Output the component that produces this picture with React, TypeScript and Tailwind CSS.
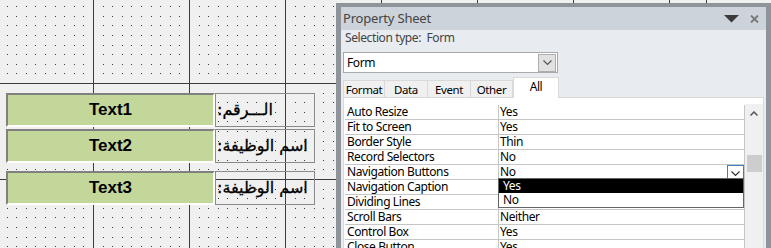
import React from "react";

const UI = { fontFamily: '"Noto Sans", "Open Sans", sans-serif' };

function Grid() {
  const dots: React.ReactNode[] = [];
  for (let i = 0; i < 36; i++) {
    const x = Math.round(6.6 + 9.6 * i);
    for (let j = 0; j < 26; j++) {
      const y = Math.round(6.2 + 9.6 * j);
      dots.push(<rect key={`${i}-${j}`} x={x} y={y} width={1} height={1} fill="#3a3a3a" />);
    }
  }
  const vx = [93, 189, 285, 381, 477, 573, 669, 706];
  const hy = [83, 179];
  return (
    <svg className="absolute inset-0" width={771} height={248}>
      {dots}
      {vx.map((x) => (
        <rect key={"v" + x} x={x} y={0} width={1} height={248} fill="#3c3c3c" />
      ))}
      {hy.map((y) => (
        <rect key={"h" + y} x={0} y={y} width={771} height={1} fill="#3c3c3c" />
      ))}
    </svg>
  );
}

function FieldRow({ text, label, className }: { text: string; label: string; className?: string }) {
  return (
    <div className={"flex " + (className ?? "")}>
      <div
        className="w-[209px] h-[34px] bg-[#c4d79b] border-t-2 border-l-2 border-b-2 border-r-2 border-t-[#808080] border-l-[#808080] border-b-white border-r-white flex items-center justify-center text-[17px] font-bold text-black"
        style={{ fontFamily: '"Liberation Sans", Arial, sans-serif' }}
      >
        {text}
      </div>
      <div
        dir="rtl"
        className="w-[100px] h-[34px] border border-[#8a8a8a] flex items-center pl-[1px] text-[16px] text-black whitespace-nowrap overflow-hidden"
        style={{ fontFamily: '"DejaVu Sans", sans-serif', WebkitTextStroke: "0.3px #000" }}
      >
        <span className="w-full text-left">{label}</span>
      </div>
    </div>
  );
}

const rows: [string, string][] = [
  ["Auto Resize", "Yes"],
  ["Fit to Screen", "Yes"],
  ["Border Style", "Thin"],
  ["Record Selectors", "No"],
  ["Navigation Buttons", "No"],
  ["Navigation Caption", ""],
  ["Dividing Lines", ""],
  ["Scroll Bars", "Neither"],
  ["Control Box", "Yes"],
  ["Close Button", "Yes"],
];

function Chevron({ color = "#555" }: { color?: string }) {
  return (
    <svg width="9" height="6" viewBox="0 0 9 6">
      <polyline points="0.5,0.5 4.5,4.5 8.5,0.5" fill="none" stroke={color} strokeWidth="1.2" />
    </svg>
  );
}

function PropertySheet() {
  const tabs = [
    { t: "Format", w: "w-[42px]" },
    { t: "Data", w: "w-[43px]" },
    { t: "Event", w: "w-[43px]" },
    { t: "Other", w: "w-[42px]" },
  ];
  return (
    <div
      className="flex-1 mt-[3px] h-[245px] border-t-4 border-l-[5px] border-r-[5px] border-[#8f949a] bg-[#e8ebef] flex flex-col tracking-[-0.4px]"
      style={UI}
    >
      <div className="h-[23px] bg-[#cdd3da] flex items-center pl-[2px] pr-[7px] shrink-0">
        <span className="text-[13px] text-[#444] leading-none tracking-[-0.2px]">Property Sheet</span>
        <div className="ml-auto flex items-center gap-[11px]">
          <svg width="15" height="8" viewBox="0 0 15 8">
            <polygon points="0,0 15,0 7.5,7.5" fill="#3a3a3a" />
          </svg>
          <svg width="9" height="8" viewBox="0 0 9 8">
            <path d="M1 0.5 L8 7.5 M8 0.5 L1 7.5" stroke="#777" strokeWidth="1.8" />
          </svg>
        </div>
      </div>
      <div className="pl-[2px] pr-[2px] flex flex-col flex-1 min-h-0">
        <div className="h-[16px] flex items-center pl-[2px] text-[12px] text-[#444] whitespace-pre leading-none">
          Selection type:  Form
        </div>
        <div className="mt-[6px] w-[215px] h-[21px] bg-white border border-[#a9a9a9] flex items-center pl-[3px] pr-[1px]">
          <span className="text-[12px] text-black leading-none">Form</span>
          <div className="ml-auto w-[18px] h-[18px] bg-[#e1e1e1] border border-[#adadad] flex items-center justify-center">
            <Chevron color="#555" />
          </div>
        </div>
        <div className="mt-[4px] flex items-end h-[20px]">
          {tabs.map((tb) => (
            <div
              key={tb.t}
              className={`${tb.w} h-[17px] bg-[#f0f0f0] border-t border-r border-[#d9d9d9] first:border-l flex items-center justify-center text-[11.5px] text-black leading-none pt-[2px] tracking-[-0.4px]`}
            >
              {tb.t}
            </div>
          ))}
          <div className="w-[46px] h-[21px] -mb-px bg-white border-t border-l border-r border-[#d9d9d9] relative z-10 flex items-start justify-center pt-[3px] text-[12px] text-black leading-none">
            All
          </div>
        </div>
        <div className="flex-1 bg-white border border-[#d9d9d9] border-b-0 pt-[7px] pl-[1px] flex min-h-0">
          <div className="w-[400px] flex flex-col">
            {rows.map(([k, v]) => (
              <div key={k} className="flex h-[15px] shrink-0 border-b border-[#c6c6c6] text-[12px] leading-[14px] text-black">
                <div className="w-[154px] border-r border-[#c6c6c6] pl-[2px] whitespace-nowrap">{k}</div>
                <div className="w-[246px] border-r border-[#c6c6c6] pl-[1px] relative">
                  {v}
                  {k === "Navigation Buttons" && (
                    <>
                      <div className="absolute right-0 top-0 w-[17px] h-[14px] bg-white border border-[#3c7fc4] flex items-end justify-center pb-[1px]">
                        <Chevron color="#333" />
                      </div>
                      <div className="absolute left-[-1px] top-[13px] w-[246px] h-[30px] bg-white border border-[#646464] z-20 flex flex-col">
                        <div className="h-[14px] bg-black text-white pl-[4px] leading-[14px]">Yes</div>
                        <div className="h-[14px] bg-white text-black pl-[4px] leading-[14px]">No</div>
                      </div>
                    </>
                  )}
                </div>
              </div>
            ))}
          </div>
          <div className="w-[18px] bg-[#f0f0f0] flex flex-col items-center -mt-[1px]">
            <div className="mt-[7px]">
              <svg width="8" height="5" viewBox="0 0 8 5">
                <polyline points="0.5,4.5 4,1 7.5,4.5" fill="none" stroke="#555" strokeWidth="1.5" />
              </svg>
            </div>
            <div className="mt-[39px] w-[15px] h-[17px] bg-[#cdcdcd]" />
          </div>
        </div>
      </div>
    </div>
  );
}

export default function App() {
  return (
    <div className="relative w-[771px] h-[248px] overflow-hidden bg-[#f0f0f0]">
      <Grid />
      <div className="relative flex h-full">
        <div className="w-[336px] shrink-0 pt-[93px] pl-[6px]">
          <FieldRow text="Text1" label="الـــرقم:" />
          <FieldRow text="Text2" label="اسم الوظيفة:" className="mt-[2px]" />
          <FieldRow text="Text3" label="اسم الوظيفة:" className="mt-[8px]" />
        </div>
        <PropertySheet />
      </div>
    </div>
  );
}
